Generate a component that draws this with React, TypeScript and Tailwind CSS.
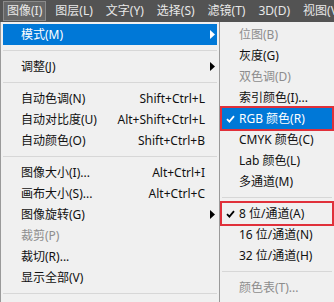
import React from 'react';

type Item =
  | { sep: true }
  | {
      sep?: false;
      label: string;
      key?: string;
      disabled?: boolean;
      arrow?: boolean;
      active?: boolean;
      checked?: boolean;
      marked?: boolean;
    };

const MAIN: Item[] = [
  { label: '模式(M)', arrow: true, active: true },
  { sep: true },
  { label: '调整(J)', arrow: true },
  { sep: true },
  { label: '自动色调(N)', key: 'Shift+Ctrl+L' },
  { label: '自动对比度(U)', key: 'Alt+Shift+Ctrl+L' },
  { label: '自动颜色(O)', key: 'Shift+Ctrl+B' },
  { sep: true },
  { label: '图像大小(I)...', key: 'Alt+Ctrl+I' },
  { label: '画布大小(S)...', key: 'Alt+Ctrl+C' },
  { label: '图像旋转(G)', arrow: true },
  { label: '裁剪(P)', disabled: true },
  { label: '裁切(R)...' },
  { label: '显示全部(V)' },
  { sep: true },
];

const SUB: Item[] = [
  { label: '位图(B)', disabled: true },
  { label: '灰度(G)' },
  { label: '双色调(D)', disabled: true },
  { label: '索引颜色(I)...' },
  { label: 'RGB 颜色(R)', checked: true, active: true, marked: true },
  { label: 'CMYK 颜色(C)' },
  { label: 'Lab 颜色(L)' },
  { label: '多通道(M)' },
  { sep: true },
  { label: '8 位/通道(A)', checked: true, marked: true },
  { label: '16 位/通道(N)' },
  { label: '32 位/通道(H)' },
  { sep: true },
  { label: '颜色表(T)...', disabled: true },
];

const BAR = ['图像(I)', '图层(L)', '文字(Y)', '选择(S)', '滤镜(T)', '3D(D)', '视图(V)'];

function Arrow({ white }: { white?: boolean }) {
  return (
    <svg width="5" height="9" viewBox="0 0 5 9" className="shrink-0">
      <path d="M0 0 L5 4.5 L0 9 Z" fill={white ? '#ffffff' : '#000000'} />
    </svg>
  );
}

function Check({ white }: { white?: boolean }) {
  return (
    <svg width="9" height="8" viewBox="0 0 9 8" className="shrink-0">
      <path d="M1 4.2 L3.4 6.6 L8 1.2" fill="none" stroke={white ? '#ffffff' : '#000000'} strokeWidth="1.8" />
    </svg>
  );
}

function Row({ item, sub }: { item: Item; sub?: boolean }) {
  if (item.sep) {
    return (
      <div className="h-[11px] flex items-center px-[2px]">
        <div className="h-px w-full bg-[#d7d7d7]" />
      </div>
    );
  }
  const color = item.active ? 'text-white' : item.disabled ? 'text-[#8d8d8d]' : 'text-[#111]';
  return (
    <div className="relative h-[21px] px-[2px]">
      <div className={`h-full flex items-center whitespace-nowrap ${item.active ? 'bg-[#0078d7]' : ''} ${color}`}>
        {sub ? (
          <>
            <div className="w-[17px] pl-[4px] flex items-center">{item.checked && <Check white={item.active} />}</div>
            <span>{item.label}</span>
          </>
        ) : (
          <>
            <span className="pl-[18px]">{item.label}</span>
            <span className="ml-auto">{item.key}</span>
            {item.arrow ? (
              <span className="ml-auto pr-[2px]">
                <Arrow white={item.active} />
              </span>
            ) : (
              <span className="w-[12px]" />
            )}
          </>
        )}
      </div>
      {item.marked && (
        <span className="absolute left-0 right-0 top-[-2px] bottom-[-2px] border-2 border-[#e0303a]" />
      )}
    </div>
  );
}

export default function App() {
  return (
    <div
      className="w-[334px] h-[302px] overflow-hidden flex flex-col bg-[#f0f0f0] text-[12px] leading-none"
      style={{ fontFamily: '"Noto Sans", "Noto Sans CJK SC", sans-serif' }}
    >
      <div className="h-[22px] shrink-0 bg-[#535353] flex items-center gap-[5px] pl-[3px] text-[#e8e8e8] whitespace-nowrap">
        {BAR.map((b, i) => (
          <div
            key={b}
            className={`h-[20px] flex items-center px-[3px] ${i === 0 ? 'bg-[#666] border border-[#8a8a8a]' : 'border border-transparent'}`}
          >
            {b}
          </div>
        ))}
      </div>
      <div className="flex flex-1 min-h-0">
        <div className="w-[220px] shrink-0 border-l border-r border-[#9a9a9a] pt-[2px]">
          {MAIN.map((it, i) => (
            <Row key={i} item={it} />
          ))}
        </div>
        <div className="flex-1 pt-[2px]">
          {SUB.map((it, i) => (
            <Row key={i} item={it} sub />
          ))}
        </div>
      </div>
    </div>
  );
}
